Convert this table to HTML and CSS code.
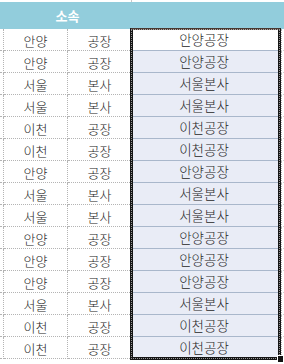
FILE: index.html
```html
<!DOCTYPE html>
<html lang="ko">
<head>
<meta charset="utf-8">
<link rel="stylesheet" href="styles.css">
</head>
<body>
<div class="sheet">
  <div class="topstrip"><span class="tick"></span></div>
  <div class="header">
    <div class="h-pad"></div>
    <div class="h-title">소속</div>
    <div class="h-rest"></div>
  </div>
  <div class="grid" id="grid">
    <div class="c0"></div><div class="c1">안양</div><div class="c2">공장</div><div class="c3 active">안양공장</div><div class="c4"></div>
    <div class="c0"></div><div class="c1">안양</div><div class="c2">공장</div><div class="c3">안양공장</div><div class="c4"></div>
    <div class="c0"></div><div class="c1">서울</div><div class="c2">본사</div><div class="c3">서울본사</div><div class="c4"></div>
    <div class="c0"></div><div class="c1">서울</div><div class="c2">본사</div><div class="c3">서울본사</div><div class="c4"></div>
    <div class="c0"></div><div class="c1">이천</div><div class="c2">공장</div><div class="c3">이천공장</div><div class="c4"></div>
    <div class="c0"></div><div class="c1">이천</div><div class="c2">공장</div><div class="c3">이천공장</div><div class="c4"></div>
    <div class="c0"></div><div class="c1">안양</div><div class="c2">공장</div><div class="c3">안양공장</div><div class="c4"></div>
    <div class="c0"></div><div class="c1">서울</div><div class="c2">본사</div><div class="c3">서울본사</div><div class="c4"></div>
    <div class="c0"></div><div class="c1">서울</div><div class="c2">본사</div><div class="c3">서울본사</div><div class="c4"></div>
    <div class="c0"></div><div class="c1">안양</div><div class="c2">공장</div><div class="c3">안양공장</div><div class="c4"></div>
    <div class="c0"></div><div class="c1">안양</div><div class="c2">공장</div><div class="c3">안양공장</div><div class="c4"></div>
    <div class="c0"></div><div class="c1">안양</div><div class="c2">공장</div><div class="c3">안양공장</div><div class="c4"></div>
    <div class="c0"></div><div class="c1">서울</div><div class="c2">본사</div><div class="c3">서울본사</div><div class="c4"></div>
    <div class="c0"></div><div class="c1">이천</div><div class="c2">공장</div><div class="c3">이천공장</div><div class="c4"></div>
    <div class="c0"></div><div class="c1">이천</div><div class="c2">공장</div><div class="c3">이천공장</div><div class="c4"></div>
  </div>
  <div class="selection"></div>
  <div class="handle"></div>
</div>
</body>
</html>
```
FILE: styles.css
```css
html, body {
  margin: 0;
  padding: 0;
  background: #ffffff;
}
body {
  width: 284px;
  height: 364px;
  overflow: hidden;
  font-family: "Noto Sans CJK KR", "Noto Sans", sans-serif;
  font-size: 13px;
  font-weight: 300;
  color: #262626;
}
.sheet {
  position: relative;
  width: 284px;
  height: 364px;
}
.topstrip {
  height: 2px;
  position: relative;
  background: #ffffff;
}
.tick {
  position: absolute;
  left: 131px;
  top: 0;
  width: 1px;
  height: 2px;
  background: #c8c8c8;
}
.header {
  height: 27px;
  background: #92cddc;
  display: flex;
  align-items: center;
}
.h-pad { width: 4px; }
.h-title {
  width: 127px;
  text-align: center;
  color: #ffffff;
  font-weight: 700;
  font-size: 13px;
  line-height: 27px;
}
.h-rest { flex: 1; }
.grid {
  display: grid;
  grid-template-columns: 4px 64px 64px 149px 3px;
  grid-auto-rows: 22px;
}
.grid > div {
  box-sizing: border-box;
  border-bottom: 1px dotted #b4b4b4;
  display: flex;
  align-items: center;
  justify-content: center;
  line-height: 1;
  padding-top: 1px;
}
.c0 {
  border-right: 1px dotted #b4b4b4;
}
.c1 {
  border-right: 1px dotted #b4b4b4;
}
.c2 {
  border-right: 1px dotted #b4b4b4;
}
.grid > .c3 {
  background: #e9ecf6;
  border-bottom: 1px solid #a9b7cb;
  padding-right: 5px;
  font-size: 13.5px;
}
.grid > .c3.active {
  background: #ffffff;
}
.grid > .c4 {
  border-left: 1px dotted #b4b4b4;
  border-bottom: 1px dotted #d0d0d0;
}
.selection {
  position: absolute;
  left: 130px;
  top: 28px;
  width: 151px;
  height: 332px;
  box-sizing: border-box;
  border: 3px solid #151515;
  border-top: 2px solid #4a3a33;
  outline: 1px dotted rgba(255, 255, 255, 0.55);
  outline-offset: -2px;
  pointer-events: none;
}
.handle {
  position: absolute;
  left: 277px;
  top: 355px;
  width: 5px;
  height: 6px;
  background: #111111;
  border: 1px solid #ffffff;
}
```
